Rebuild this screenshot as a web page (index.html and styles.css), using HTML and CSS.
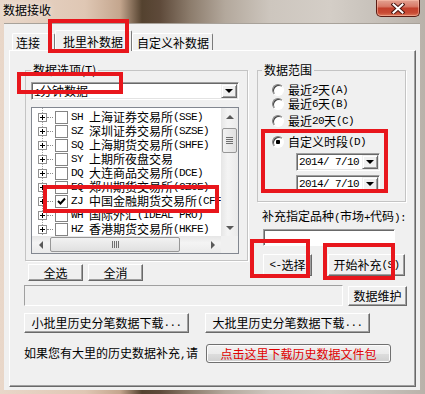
FILE: index.html
```html
<!DOCTYPE html>
<html lang="zh">
<head>
  <meta charset="UTF-8" />
  <title>数据接收</title>
  <link rel="stylesheet" href="styles.css">
</head>
<body>
  <div class="window">
    <div class="titlebar">
      <span class="title">数据接收</span>
      <div class="close">
        <svg width="14" height="11" viewBox="0 0 14 11">
          <path d="M2.5 1.5 L11.5 9.5 M11.5 1.5 L2.5 9.5" stroke="#4a1610" stroke-width="4" stroke-linecap="square" fill="none" />
          <path d="M2.5 1.5 L11.5 9.5 M11.5 1.5 L2.5 9.5" stroke="#fff" stroke-width="2" stroke-linecap="square" fill="none" />
        </svg>
      </div>
    </div>

    <div class="client">
      <div class="tabs">
        <div class="tab tab-conn">连接</div>
        <div class="tab tab-batch active">批里补数据</div>
        <div class="tab tab-custom">自定义补数据</div>
      </div>

      <div class="panel">
        <div class="top">
          <div class="col-left">
            <fieldset class="group group-options">
              <legend>数据选项(T)</legend>
              <div class="combo">
                <span class="combo-text"><span class="lat">1</span>分钟数据</span>
                <span class="drop"><span class="tri-down"></span></span>
              </div>

              <div class="tree">
                <div class="rows">
                  <div class="node"><span class="expander"></span><span class="line"></span><span class="check"></span><span class="lat code">SH</span>上海证券交易所<span class="lat">(SSE)</span></div>
                  <div class="node"><span class="expander"></span><span class="line"></span><span class="check"></span><span class="lat code">SZ</span>深圳证券交易所<span class="lat">(SZSE)</span></div>
                  <div class="node"><span class="expander"></span><span class="line"></span><span class="check"></span><span class="lat code">SQ</span>上海期货交易所<span class="lat">(SHFE)</span></div>
                  <div class="node"><span class="expander"></span><span class="line"></span><span class="check"></span><span class="lat code">SY</span>上期所夜盘交易</div>
                  <div class="node"><span class="expander"></span><span class="line"></span><span class="check"></span><span class="lat code">DQ</span>大连商品交易所<span class="lat">(DCE)</span></div>
                  <div class="node"><span class="expander"></span><span class="line"></span><span class="check"></span><span class="lat code">EQ</span>郑州期货交易所<span class="lat">(CZCE)</span></div>
                  <div class="node"><span class="expander"></span><span class="line"></span><span class="check checked"><svg width="11" height="11" viewBox="0 0 11 11"><path d="M2 5 L4.5 7.5 L9 2.5" stroke="#000" stroke-width="2" fill="none" /></svg></span><span class="lat code">ZJ</span>中国金融期货交易所<span class="lat">(CFFEX)</span></div>
                  <div class="node"><span class="expander"></span><span class="line"></span><span class="check"></span><span class="lat code">WH</span>国际外汇<span class="lat">(IDEAL PRO)</span></div>
                  <div class="node"><span class="expander"></span><span class="line"></span><span class="check"></span><span class="lat code">HZ</span>香港期货交易所<span class="lat">(HKFE)</span></div>
                  <div class="node"><span class="expander"></span><span class="line"></span><span class="check"></span><span class="lat code">KH</span>香港联合交易所<span class="lat">(HKEX)</span></div>
                </div>
                <div class="vscroll">
                  <span class="sb-btn"><span class="tri-up-s"></span></span>
                  <span class="vtrack"><span class="vthumb"><span class="grip-v"></span></span></span>
                  <span class="sb-btn"><span class="tri-down-s"></span></span>
                </div>
                <div class="hscroll">
                  <span class="sb-btn"><span class="tri-left-s"></span></span>
                  <span class="htrack"><span class="hthumb"><span class="grip-h"></span></span></span>
                  <span class="sb-btn"><span class="tri-right-s"></span></span>
                </div>
                <div class="corner"></div>
              </div>
            </fieldset>

            <div class="btn-row btn-row-select">
              <button class="btn btn-small">全选</button>
              <button class="btn btn-small">全消</button>
            </div>
          </div>

          <div class="col-right">
            <fieldset class="group group-range">
              <legend>数据范围</legend>
              <div class="radio r1"><span class="dot"></span>最近<span class="lat">2</span>天<span class="lat">(A)</span></div>
              <div class="radio r2"><span class="dot"></span>最近<span class="lat">6</span>天<span class="lat">(B)</span></div>
              <div class="radio r3"><span class="dot"></span>最近<span class="lat">20</span>天<span class="lat">(C)</span></div>
              <div class="radio r4"><span class="dot on"></span>自定义时段<span class="lat">(D)</span></div>
              <div class="date"><span class="lat date-text">2014/ 7/10</span><span class="drop"><span class="tri-down"></span></span></div>
              <div class="date"><span class="lat date-text">2014/ 7/10</span><span class="drop"><span class="tri-down"></span></span></div>
            </fieldset>

            <div class="field-label">补充指定品种<span class="lat">(</span>市场<span class="lat">+</span>代码<span class="lat">):</span></div>
            <div class="input"></div>

            <div class="btn-row btn-row-action">
              <button class="btn btn-pick"><span class="lat">&lt;-</span>选择</button>
              <button class="btn btn-start">开始补充<span class="lat">(S)</span></button>
            </div>
          </div>
        </div>

        <div class="progress-row">
          <div class="progress"></div>
          <button class="btn btn-maint">数据维护</button>
        </div>

        <div class="dl-row">
          <button class="btn btn-dl">小批里历史分笔数据下载<span class="lat">...</span></button>
          <button class="btn btn-dl">大批里历史分笔数据下载<span class="lat">...</span></button>
        </div>

        <div class="pkg-row">
          <span class="pkg-text">如果您有大里的历史数据补充<span class="lat">,</span>请</span>
          <button class="btn-pkg">点击这里下载历史数据文件包</button>
        </div>
      </div>
    </div>

    <div class="mark mark-tab"></div>
    <div class="mark mark-combo"></div>
    <div class="mark mark-zj"></div>
    <div class="mark mark-date"></div>
    <div class="mark mark-pick"></div>
    <div class="mark mark-start"></div>
  </div>
</body>
</html>
```

FILE: styles.css
```css
* {
  box-sizing: border-box;
}

body {
  margin: 0;
  width: 425px;
  height: 394px;
  overflow: hidden;
  font-family: "Noto Sans CJK SC", sans-serif;
  font-size: 12px;
  line-height: 14px;
  color: #000;
  background: linear-gradient(90deg, #e9d7c9 0, #dfc7b4 85px, #c4a68e 120px, #54422f 142px, #5e4a3a 160px, #8c7c6c 190px, #b3a89c 225px, #cdc6be 270px, #d4cec7 330px, #c3bdb6 390px, #b9b2aa 425px);
}

.window {
  position: relative;
  height: 394px;
  display: flex;
  flex-direction: column;
}

/* title bar */
.titlebar {
  height: 23px;
  display: flex;
  align-items: flex-start;
}

.title {
  padding: 3px 0 0 3px;
  font-size: 12px;
  color: #000;
  text-shadow: 0 0 6px rgba(255, 255, 255, 0.8);
}

.close {
  margin-left: auto;
  margin-right: 5px;
  width: 44px;
  height: 17px;
  display: flex;
  align-items: center;
  justify-content: center;
  border: 1px solid #5a1c14;
  border-top: none;
  border-radius: 0 0 5px 5px;
  background: linear-gradient(#e3a292 0, #d87a68 40%, #c2402c 52%, #c84a34 80%, #dc7a5c 100%);
  box-shadow: inset 0 0 0 1px rgba(255, 200, 180, 0.5);
}

/* client area */
.client {
  flex: 1;
  margin: 0 5px 4px 4px;
  background: #f0f0f0;
  display: flex;
  flex-direction: column;
  border-top: 1px solid #a8a29a;
}

.tabs {
  height: 26px;
  display: flex;
  align-items: flex-end;
  padding-left: 8px;
}

.tab {
  height: 17px;
  padding-top: 2px;
  white-space: nowrap;
  border-top: 1px solid #fff;
  border-left: 1px solid #fff;
  border-right: 1px solid #7a7a7a;
  border-radius: 2px 2px 0 0;
  background: #f0f0f0;
}

.tab-conn {
  width: 43px;
  padding-left: 3px;
}

.tab-batch {
  width: 77px;
  padding-left: 7px;
}

.tab-custom {
  width: 81px;
  padding-left: 4px;
}

.tab.active {
  height: 21px;
  padding-top: 4px;
  margin-bottom: -1px;
  position: relative;
  z-index: 1;
}

.panel {
  flex: 1;
  margin: 0 4px 3px 5px;
  padding: 12px 8px 0 14px;
  border: 1px solid;
  border-color: #fff #696969 #696969 #fff;
  box-shadow: inset -1px -1px 0 #a0a0a0;
  background: #f0f0f0;
}

.top {
  display: flex;
  align-items: flex-start;
}

.col-left {
  width: 224px;
}

.col-right {
  width: 150px;
  margin-left: 9px;
}

.lat {
  font-family: "Liberation Mono", monospace;
  font-size: 11px;
  letter-spacing: -0.6px;
}

/* group boxes */
.group {
  margin: 0;
  border: 1px solid #c4c4c4;
  box-shadow: 1px 1px 0 #fff;
}

.group legend {
  padding: 0 2px;
  line-height: 14px;
}

.group-options {
  margin-left: 1px;
  width: 223px;
  padding: 5px 7px 6px 5px;
}

.group-range {
  width: 149px;
  padding: 6px 4px 8px 4px;
}

/* combo + date boxes */
.combo,
.date {
  display: flex;
  align-items: stretch;
  background: #fff;
  border: 1px solid;
  border-color: #a0a0a0 #fff #fff #a0a0a0;
  box-shadow: inset 1px 1px 0 #696969, inset -1px -1px 0 #e3e3e3;
}

.combo {
  width: 208px;
  height: 18px;
}

.combo-text,
.date-text {
  flex: 1;
  padding: 1px 0 0 2px;
  white-space: nowrap;
}

.drop {
  width: 16px;
  margin: 1px 1px 1px 0;
  display: flex;
  align-items: center;
  justify-content: center;
  background: #f0f0f0;
  border: 1px solid;
  border-color: #f0f0f0 #696969 #696969 #f0f0f0;
  box-shadow: inset 1px 1px 0 #fff, inset -1px -1px 0 #a0a0a0;
}

.tri-down {
  width: 0;
  height: 0;
  border-left: 4px solid transparent;
  border-right: 4px solid transparent;
  border-top: 4px solid #000;
}

/* tree list */
.tree {
  margin-top: 7px;
  width: 208px;
  height: 147px;
  display: grid;
  grid-template-columns: 1fr 17px;
  grid-template-rows: 1fr 17px;
  background: #fff;
  border: 1px solid #828790;
}

.rows {
  padding-top: 2px;
  overflow: hidden;
  background-image: repeating-linear-gradient(to bottom, #a0a0a0 0 1px, transparent 1px 2px);
  background-size: 1px 100%;
  background-position: 10px 0;
  background-repeat: no-repeat;
}

.node {
  height: 14px;
  display: flex;
  align-items: center;
  white-space: nowrap;
  padding-left: 6px;
}

.expander {
  position: relative;
  flex: none;
  width: 9px;
  height: 9px;
  border: 1px solid #919191;
  background: #fff;
}

.expander::before {
  content: "";
  position: absolute;
  left: 1px;
  top: 3px;
  width: 5px;
  height: 1px;
  background: #000;
}

.expander::after {
  content: "";
  position: absolute;
  left: 3px;
  top: 1px;
  width: 1px;
  height: 5px;
  background: #000;
}

.line {
  flex: none;
  width: 6px;
  margin: 0 2px 0 0;
  border-top: 1px dotted #8a8a8a;
}

.check {
  flex: none;
  width: 13px;
  height: 13px;
  display: flex;
  align-items: center;
  justify-content: center;
  border: 1px solid #848484;
  background: #fff;
}

.code {
  margin: 0 6px 0 3px;
}

/* scrollbars */
.vscroll,
.hscroll {
  display: flex;
  background: linear-gradient(90deg, #e6e6e6, #f4f4f4 40%, #eaeaea);
}

.vscroll {
  flex-direction: column;
}

.hscroll {
  background: linear-gradient(#e6e6e6, #f4f4f4 40%, #eaeaea);
}

.sb-btn {
  flex: none;
  width: 17px;
  height: 17px;
  display: flex;
  align-items: center;
  justify-content: center;
}

.vtrack,
.htrack {
  flex: 1;
  display: flex;
}

.vthumb {
  margin: 3px 1px 0;
  width: 15px;
  height: 25px;
  border: 1px solid #979797;
  border-radius: 2px;
  background: linear-gradient(90deg, #f2f2f2, #e0e0e0);
  display: flex;
  align-items: center;
  justify-content: center;
}

.hthumb {
  margin: 1px 0 0 1px;
  width: 130px;
  height: 15px;
  border: 1px solid #979797;
  border-radius: 2px;
  background: linear-gradient(#f2f2f2, #e0e0e0);
  display: flex;
  align-items: center;
  justify-content: center;
}

.grip-v {
  width: 7px;
  height: 7px;
  background: repeating-linear-gradient(#6f6f6f 0 1px, transparent 1px 2px);
}

.grip-h {
  width: 7px;
  height: 7px;
  background: repeating-linear-gradient(90deg, #6f6f6f 0 1px, transparent 1px 2px);
}

.tri-up-s {
  border-left: 4px solid transparent;
  border-right: 4px solid transparent;
  border-bottom: 4px solid #5a5a5a;
}

.tri-down-s {
  border-left: 4px solid transparent;
  border-right: 4px solid transparent;
  border-top: 4px solid #5a5a5a;
}

.tri-left-s {
  border-top: 4px solid transparent;
  border-bottom: 4px solid transparent;
  border-right: 4px solid #5a5a5a;
}

.tri-right-s {
  border-top: 4px solid transparent;
  border-bottom: 4px solid transparent;
  border-left: 4px solid #5a5a5a;
}

.corner {
  background: #f0f0f0;
}

/* buttons */
.btn {
  display: inline-flex;
  align-items: center;
  justify-content: center;
  padding: 0;
  font-family: "Noto Sans CJK SC", sans-serif;
  font-size: 12px;
  line-height: 14px;
  color: #000;
  background: #f0f0f0;
  border: 1px solid;
  border-color: #fff #696969 #696969 #fff;
  box-shadow: inset -1px -1px 0 #a0a0a0;
  white-space: nowrap;
}

.btn-row {
  display: flex;
}

.btn-row-select {
  margin-top: 3px;
  padding-left: 4px;
  gap: 5px;
}

.btn-small {
  width: 55px;
  height: 17px;
}

/* range group */
.radio {
  height: 14px;
  margin-left: 10px;
  display: flex;
  align-items: center;
  white-space: nowrap;
}

.r3 {
  margin-top: 3px;
}

.r4 {
  margin-top: 7px;
}

.dot {
  flex: none;
  width: 12px;
  height: 12px;
  margin-right: 4px;
  border-radius: 50%;
  border: 1px solid;
  border-color: #808080 #fff #fff #808080;
  background: #fff;
  box-shadow: inset 1px 1px 0 #404040;
}

.dot.on {
  background: radial-gradient(circle, #000 0 2px, #fff 2.5px);
}

.date {
  width: 84px;
  height: 18px;
  margin: 4px 0 0 34px;
}

.date + .date {
  margin-top: 4px;
}

.field-label {
  margin-top: 7px;
  padding-left: 5px;
  white-space: nowrap;
}

.input {
  margin: 4px 0 0 6px;
  width: 132px;
  height: 17px;
  background: #fff;
  border: 1px solid;
  border-color: #a0a0a0 #fff #fff #a0a0a0;
  box-shadow: inset 1px 1px 0 #696969;
}

.btn-row-action {
  margin-top: 8px;
  padding-left: 6px;
}

.btn-pick {
  width: 49px;
  height: 22px;
}

.btn-start {
  width: 77px;
  height: 22px;
  margin-left: 16px;
}

/* lower rows */
.progress-row {
  margin-top: 4px;
  display: flex;
  align-items: flex-start;
}

.progress {
  width: 319px;
  height: 21px;
  border: 1px solid;
  border-color: #a0a0a0 #fff #fff #a0a0a0;
  background: #f0f0f0;
}

.btn-maint {
  width: 59px;
  height: 20px;
  margin: 1px 0 0 5px;
}

.dl-row {
  margin-top: 7px;
  display: flex;
  gap: 16px;
}

.btn-dl {
  width: 165px;
  height: 20px;
}

.pkg-row {
  margin-top: 11px;
  display: flex;
  align-items: center;
}

.pkg-text {
  width: 182px;
  white-space: nowrap;
}

.btn-pkg {
  width: 185px;
  height: 19px;
  padding: 0;
  font-family: "Noto Sans CJK SC", sans-serif;
  font-size: 12px;
  line-height: 14px;
  color: #e00000;
  border: 1px solid #707070;
  border-radius: 3px;
  background: linear-gradient(#f2f2f2 0, #ebebeb 50%, #dddddd 51%, #cfcfcf 100%);
  box-shadow: inset 0 0 0 1px #fcfcfc;
}

/* red annotation boxes over the dialog */
.mark {
  position: absolute;
  border: 4px solid #e8161c;
  z-index: 5;
}

.mark-tab {
  left: 48px;
  top: 19px;
  width: 81px;
  height: 34px;
}

.mark-combo {
  left: 17px;
  top: 72px;
  width: 106px;
  height: 22px;
}

.mark-zj {
  left: 43px;
  top: 185px;
  width: 176px;
  height: 28px;
}

.mark-date {
  left: 261px;
  top: 129px;
  width: 127px;
  height: 64px;
}

.mark-pick {
  left: 250px;
  top: 239px;
  width: 60px;
  height: 39px;
}

.mark-start {
  left: 323px;
  top: 243px;
  width: 72px;
  height: 37px;
}
```
